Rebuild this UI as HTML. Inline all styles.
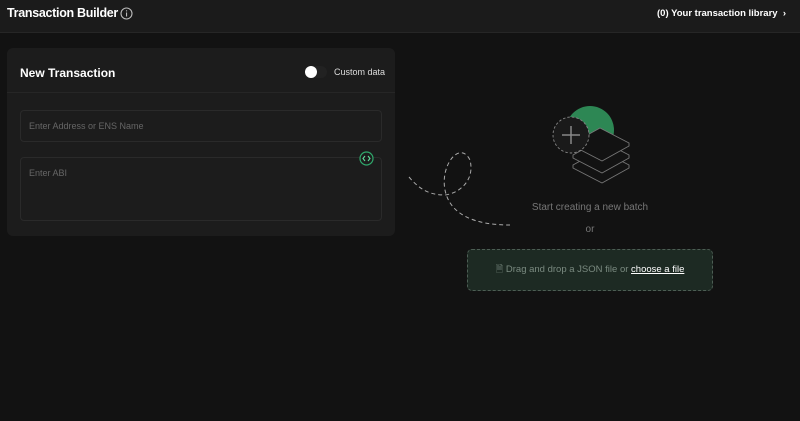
<!DOCTYPE html>
<html><head><style>
*{margin:0;padding:0;box-sizing:border-box}
body{width:800px;height:421px;background:#121212;font-family:"Liberation Sans",sans-serif;color:#fff;position:relative;overflow:hidden}
.hdr{position:absolute;left:0;top:0;width:800px;height:33px;background:#1b1b1b;border-bottom:1px solid #262626}
.t{position:absolute;left:7px;top:6px;font-size:12.5px;font-weight:bold;letter-spacing:-0.3px}
.lib{position:absolute;right:14px;top:8px;font-size:9.5px;font-weight:bold}
.card{position:absolute;left:7px;top:48px;width:388px;height:188px;background:#1c1c1c;border-radius:6px}
.ch{height:45px;border-bottom:1px solid #262626;position:relative}
.ch b{position:absolute;left:13px;top:18px;font-size:12px}
.tog{position:absolute;left:298px;top:18px;width:22px;height:12px;border-radius:6px;background:#222}
.tog i{position:absolute;left:0;top:0;width:12px;height:12px;border-radius:50%;background:#fff}
.cd{position:absolute;left:327px;top:19px;font-size:9px;color:#ddd}
.in{position:absolute;border:1px solid #2a2a2a;border-radius:4px;font-size:9px;color:#666;padding-left:8px}
.drop{position:absolute;left:467px;top:249px;width:246px;height:42px;background:#1d2a23;border:1px dashed #4d5e54;border-radius:5px;font-size:9.5px;color:#7a8a80;text-align:center;line-height:40px}
.drop u{color:#fff}
</style></head><body>
<div class="hdr"><div class="t">Transaction Builder</div>
<svg style="position:absolute;left:120px;top:7px" width="13" height="13"><circle cx="6.5" cy="6.5" r="5.5" fill="none" stroke="#bbb" stroke-width="1.1"/><rect x="6" y="5.5" width="1.1" height="4" fill="#bbb"/><rect x="6" y="3.3" width="1.1" height="1.1" fill="#bbb"/></svg>
<div class="lib">(0) Your transaction library &nbsp;›</div></div>
<div class="card"><div class="ch"><b>New Transaction</b><div class="tog"><i></i></div><div class="cd">Custom data</div></div>
<div class="in" style="left:13px;top:62px;width:362px;height:32px;line-height:30px">Enter Address or ENS Name</div>
<div class="in" style="left:13px;top:109px;width:362px;height:64px;padding-top:10px">Enter ABI</div>
<svg style="position:absolute;left:352px;top:103px" width="15" height="15"><circle cx="7.5" cy="7.5" r="6.5" fill="#1c1c1c" stroke="#2fa86b" stroke-width="1.2"/><path d="M6 5L4 7.5 6 10M9 5L11 7.5 9 10" fill="none" stroke="#5fdc9a" stroke-width="1.1"/></svg>
</div>
<svg style="position:absolute;left:400px;top:95px" width="240" height="140">
<circle cx="190" cy="35" r="24" fill="#2d8754"/>
<g fill="#121212" stroke="#777" stroke-width="0.9" stroke-linejoin="round">
<path d="M173 70 L200 55 L229 70 L229 73 L202 88 L173 73 Z"/>
<path d="M173 60 L200 45 L229 60 L229 63 L202 78 L173 63 Z"/>
<path d="M173 48 L200 33 L229 48 L229 51 L202 66 L173 51 Z"/>
</g>
<circle cx="171" cy="40" r="18" fill="#1a1a1a" stroke="#888" stroke-width="0.9" stroke-dasharray="2.5 2"/>
<path d="M171 31V49M162 40H180" stroke="#888" stroke-width="1.5"/>
<path d="M9 82 C20 95 30 100 45 100 C60 98 75 85 70 65 C60 45 40 70 45 95 C50 120 75 130 110 130" fill="none" stroke="#aaa" stroke-width="1" stroke-dasharray="4 3"/>
</svg>
<div style="position:absolute;left:490px;top:202px;width:200px;text-align:center;font-size:10px;color:#777">Start creating a new batch</div>
<div style="position:absolute;left:490px;top:224px;width:200px;text-align:center;font-size:10px;color:#777">or</div>
<div class="drop">🗎 Drag and drop a JSON file or <u>choose a file</u></div>
</body></html>
